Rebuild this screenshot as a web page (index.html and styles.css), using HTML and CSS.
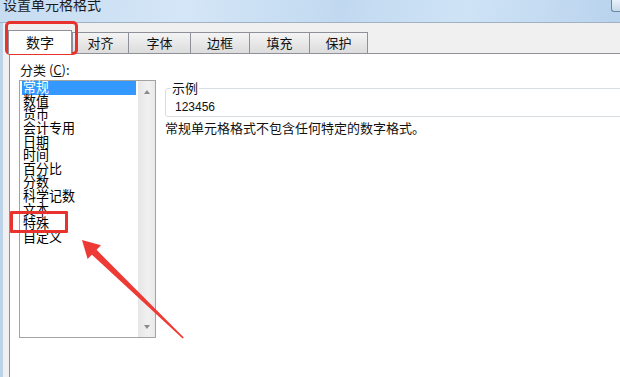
FILE: index.html
```html
<!DOCTYPE html>
<html lang="zh-CN">
<head>
<meta charset="utf-8">
<title>设置单元格格式</title>
<link rel="stylesheet" href="styles.css">
</head>
<body>
<div class="win">
  <div class="titlebar">
    <span class="title">设置单元格格式</span>
    <span class="close"></span>
  </div>
  <div class="frame">
    <div class="tabs">
      <div class="tab active w64">数字</div>
      <div class="tab w56">对齐</div>
      <div class="tab w62">字体</div>
      <div class="tab w59">边框</div>
      <div class="tab w60">填充</div>
      <div class="tab last w59">保护</div>
    </div>
    <div class="panel">
      <div class="left">
        <div class="label">分类 (<u>C</u>):</div>
        <div class="listbox">
          <ul class="items">
            <li class="sel"><span>常规</span></li>
            <li><span>数值</span></li>
            <li><span>货币</span></li>
            <li><span>会计专用</span></li>
            <li><span>日期</span></li>
            <li><span>时间</span></li>
            <li><span>百分比</span></li>
            <li><span>分数</span></li>
            <li><span>科学记数</span></li>
            <li><span>文本</span></li>
            <li><span>特殊</span></li>
            <li><span>自定义</span></li>
          </ul>
          <div class="scrollbar">
            <span class="arrow up"></span>
            <span class="arrow down"></span>
          </div>
        </div>
      </div>
      <div class="right">
        <fieldset class="sample">
          <legend>示例</legend>
          <div class="num">123456</div>
        </fieldset>
        <p class="desc">常规单元格格式不包含任何特定的数字格式。</p>
      </div>
    </div>
  </div>

  <div class="mark mark-tab"></div>
  <div class="mark mark-item"></div>
  <svg class="arrow-svg" width="620" height="377" viewBox="0 0 620 377">
    <polygon points="96.3,249.6 91.7,254.4 182.6,338.6 183.8,337.6" fill="#ee3a35"/>
    <polygon points="82,240 101,245.3 87.6,259" fill="#ee3a35"/>
  </svg>
</div>
</body>
</html>
```

FILE: styles.css
```css
html, body {
  margin: 0;
  padding: 0;
}

body {
  width: 620px;
  height: 377px;
  overflow: hidden;
  background: #f0f0f0;
  font-family: "Noto Sans CJK SC", "Noto Sans", sans-serif;
  color: #000;
}

.win {
  position: relative;
  width: 620px;
  height: 377px;
  display: flex;
  flex-direction: column;
  overflow: hidden;
}

.titlebar {
  height: 22px;
  flex: none;
  border-bottom: 1px solid #a3b2c3;
  background: linear-gradient(100deg, #c6dcf1 0%, #d4e6f7 30%, #c1d9f0 55%, #cfe3f6 75%, #b9d3ed 100%);
  display: flex;
  justify-content: space-between;
  align-items: flex-start;
  padding-left: 3px;
}

.title {
  font-size: 14px;
  line-height: 14px;
  margin-top: -3px;
  color: #1c1c1c;
}

.close {
  width: 8px;
  height: 11px;
  border-left: 1px solid #6f86a3;
  border-bottom: 1px solid #6f86a3;
  border-bottom-left-radius: 3px;
  background: linear-gradient(#e9f1f9, #c8d9ea);
}

.frame {
  flex: 1;
  min-height: 0;
  display: flex;
  flex-direction: column;
  background: #f0f0f0;
  border-left: 3px solid #bcd3ea;
  padding: 7px 0 0 6px;
}

.tabs {
  display: flex;
  align-items: flex-end;
}

.tab {
  box-sizing: border-box;
  height: 21px;
  border-top: 1px solid #8e9199;
  border-left: 1px solid #8e9199;
  background: linear-gradient(#f4f4f4, #e8e8e8 50%, #dcdcdc);
  font-size: 13px;
  line-height: 20px;
  text-align: center;
  color: #111;
}

.tab.last {
  border-right: 1px solid #8e9199;
}

.tab.active {
  height: 24px;
  line-height: 22px;
  font-size: 14px;
  margin-left: -1px;
  margin-bottom: -1px;
  background: #fff;
  border-right: 1px solid #8e9199;
  position: relative;
  z-index: 1;
}

.w64 { width: 64px; }
.w56 { width: 56px; }
.w62 { width: 62px; }
.w59 { width: 59px; }
.w60 { width: 60px; }

.panel {
  flex: 1;
  background: #fff;
  border-top: 1px solid #8e9199;
  border-left: 1px solid #8e9199;
  display: flex;
  gap: 9px;
  padding: 9px 0 0 9px;
}

.left {
  width: 137px;
  flex: none;
  display: flex;
  flex-direction: column;
}

.label {
  font-size: 13px;
  line-height: 13px;
  margin: 0 0 4px 1px;
  color: #111;
}

.listbox {
  box-sizing: border-box;
  height: 258px;
  border: 1px solid #a3a3a3;
  display: flex;
}

.items {
  flex: 1;
  list-style: none;
  margin: 0;
  padding: 0 2px;
  font-size: 13px;
  line-height: 13.64px;
  overflow: visible;
}

.items li {
  height: 13.64px;
  padding-left: 1px;
  white-space: nowrap;
}

.items li span {
  display: inline-block;
  transform: translateY(-1px) scaleY(1.06);
}

.items li.sel {
  background: #3399ff;
  color: #fff;
}

.scrollbar {
  width: 17px;
  flex: none;
  background: linear-gradient(90deg, #e6e6e6, #f1f1f1 60%, #e9e9e9);
  display: flex;
  flex-direction: column;
  justify-content: space-between;
  align-items: center;
  padding: 9px 0 8px;
  box-sizing: border-box;
}

.arrow {
  width: 0;
  height: 0;
  border-left: 3.5px solid transparent;
  border-right: 3.5px solid transparent;
}

.arrow.up {
  border-bottom: 4px solid #8a8a8a;
}

.arrow.down {
  border-top: 4px solid #8a8a8a;
}

.right {
  flex: 1;
  padding-top: 18px;
}

.sample {
  margin: 0 -12px 0 0;
  border: 1px solid #d8dde2;
  border-radius: 3px;
  padding: 5px 0 2px 9px;
  min-width: 0;
}

.sample legend {
  font-size: 13px;
  line-height: 14px;
  padding: 0 1px;
  margin-left: -4px;
  color: #111;
}

.num {
  font-family: "Liberation Sans", Arial, sans-serif;
  font-size: 12px;
  line-height: 14px;
  color: #111;
}

.desc {
  margin: 4px 0 0;
  font-size: 13px;
  line-height: 14px;
  color: #111;
}

.mark {
  position: absolute;
  box-sizing: border-box;
  border: 3px solid #e8322e;
}

.mark-tab {
  left: 5px;
  top: 21px;
  width: 73px;
  height: 34px;
  border-radius: 5px;
}

.mark-item {
  left: 10px;
  top: 211px;
  width: 58px;
  height: 22px;
  border-radius: 1px;
}

.arrow-svg {
  position: absolute;
  left: 0;
  top: 0;
}
```
